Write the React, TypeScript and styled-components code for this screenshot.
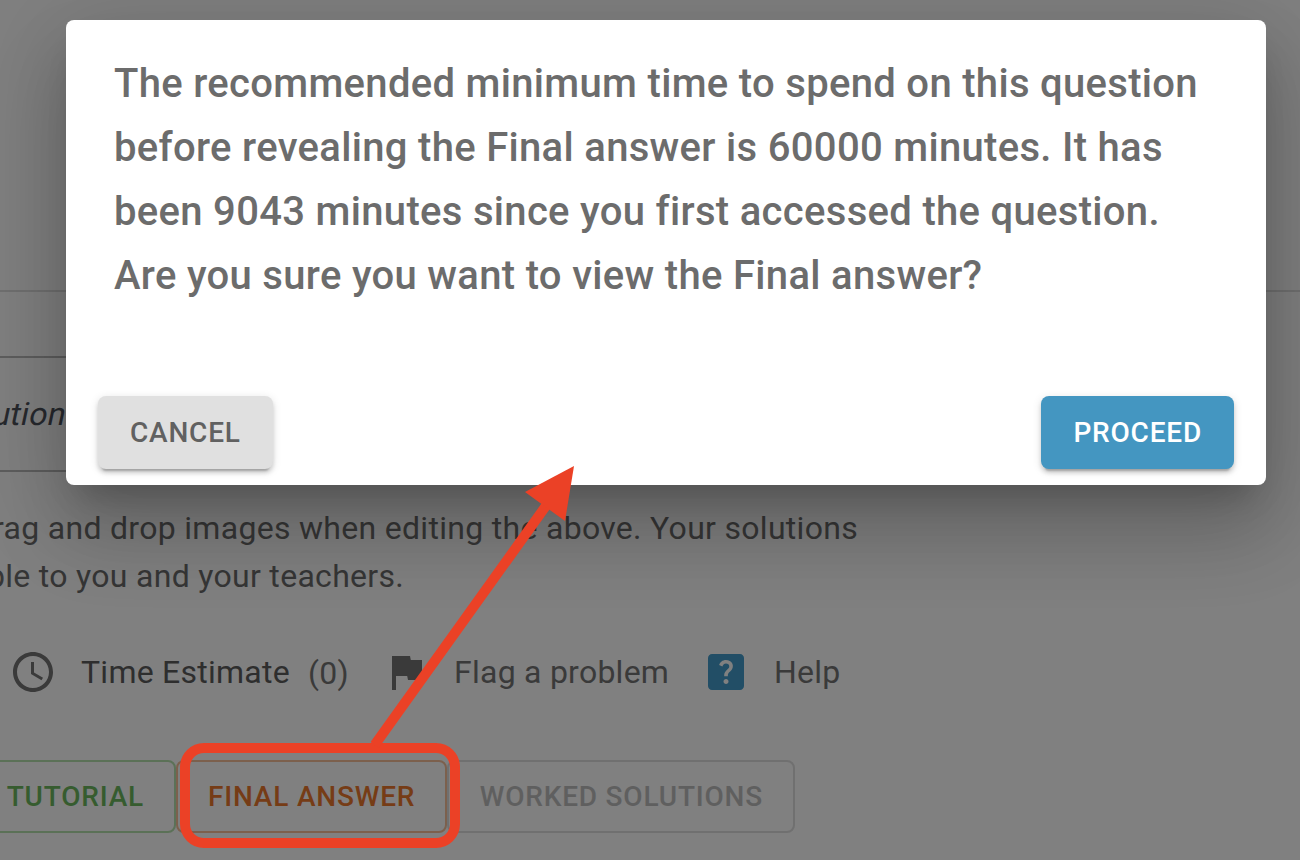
import React from "react";
import styled, { createGlobalStyle } from "styled-components";

const Global = createGlobalStyle`
  *, *::before, *::after { box-sizing: border-box; }
  html, body { margin: 0; padding: 0; }
  body {
    background: #808080;
    font-family: Roboto, "Liberation Sans", sans-serif;
    -webkit-font-smoothing: antialiased;
    overflow: hidden;
  }
`;

const Screen = styled.div`
  position: relative;
  width: 1300px;
  height: 860px;
  overflow: hidden;
  background: #808080;
`;

const Page = styled.main`
  display: flex;
  flex-direction: column;
  height: 860px;
`;

const Section = styled.section`
  height: 292px;
  border-bottom: 2px solid #707070;
`;

const Editor = styled.div`
  width: 640px;
  height: 116px;
  margin-top: 64px;
  border-top: 2px solid #5e5e5e;
  border-bottom: 2px solid #5e5e5e;
  display: flex;
  align-items: center;
  color: #27292e;
  font-size: 32px;
  letter-spacing: 0.3px;
  white-space: nowrap;
`;

const EditorText = styled.span`
  margin-left: -7px;
  transform: skewX(-12deg);
`;

const Hint = styled.p`
  margin: 32px 0 0 -13px;
  color: #363636;
  font-size: 32px;
  line-height: 48px;
  letter-spacing: 0.3px;
  white-space: nowrap;
`;

const HintLine = styled.span<{ $shift?: number }>`
  display: block;
  margin-left: ${(p) => p.$shift ?? 0}px;
`;

const Tools = styled.div`
  display: flex;
  align-items: center;
  height: 48px;
  margin: 48px 0 0 9px;
  color: #3a3a3a;
  font-size: 32px;
  letter-spacing: 0.25px;
  white-space: nowrap;
`;

const Tool = styled.div<{ $width: number; $gap: number; $color?: string }>`
  display: flex;
  align-items: center;
  gap: ${(p) => p.$gap}px;
  width: ${(p) => p.$width}px;
  color: ${(p) => p.$color ?? "#3a3a3a"};
`;

const Count = styled.span`
  margin-left: -6px;
  padding-top: 1px;
  color: #3a3a3a;
`;

const Icon = styled.svg<{ $color?: string }>`
  width: 48px;
  height: 48px;
  flex: none;
  fill: ${(p) => p.$color ?? "#3a3a3a"};
`;

const ButtonBase = styled.button`
  height: 73px;
  padding: 0 32px;
  border: 0;
  border-radius: 8px;
  background: none;
  font-family: inherit;
  font-size: 28px;
  font-weight: 500;
  line-height: 49px;
  letter-spacing: 0.8px;
  text-transform: uppercase;
  white-space: nowrap;
`;

const Tabs = styled.div`
  display: flex;
  margin: 64px 0 0 -60px;
`;

const TabButton = styled(ButtonBase)<{ $color: string; $line: string; $width: number }>`
  width: ${(p) => p.$width}px;
  padding: 0 30px;
  border: 2px solid ${(p) => p.$line};
  color: ${(p) => p.$color};
  text-align: right;
`;

const Overlay = styled.div`
  position: absolute;
  inset: 0;
  display: flex;
  align-items: flex-start;
  padding: 20px 0 0 66px;
`;

const Dialog = styled.div`
  display: flex;
  flex-direction: column;
  justify-content: space-between;
  width: 1200px;
  height: 465px;
  border-radius: 8px;
  background: #fff;
  box-shadow:
    0 22px 30px -14px rgba(0, 0, 0, 0.2),
    0 48px 76px 6px rgba(0, 0, 0, 0.14),
    0 18px 92px 16px rgba(0, 0, 0, 0.12);
`;

const DialogTitle = styled.h2`
  margin: 0;
  padding: 32px 48px;
  color: #6c6c6c;
  font-size: 40px;
  font-weight: 500;
  line-height: 64px;
  letter-spacing: 0.315px;
  white-space: nowrap;
`;

const Actions = styled.div`
  display: flex;
  justify-content: space-between;
  padding: 16px 32px;
`;

const ActionButton = styled(ButtonBase)<{ $primary?: boolean }>`
  background: ${(p) => (p.$primary ? "#4496c1" : "#e0e0e0")};
  color: ${(p) => (p.$primary ? "#fff" : "#616161")};
  box-shadow:
    0 6px 2px -4px rgba(0, 0, 0, 0.2),
    0 4px 4px 0 rgba(0, 0, 0, 0.14),
    0 2px 10px 0 rgba(0, 0, 0, 0.12);
`;

const Annotation = styled.svg`
  position: absolute;
  inset: 0;
  pointer-events: none;
`;

export default function App() {
  return (
    <Screen>
      <Global />
      <Page>
        <Section />
        <Editor>
          <EditorText>ution</EditorText>
        </Editor>
        <Hint>
          <HintLine $shift={6}>rag and drop images when editing the above. Your solutions</HintLine>
          <HintLine>ble to you and your teachers.</HintLine>
        </Hint>
        <Tools>
          <Tool $width={373} $gap={24} $color="#2e2e2e">
            <Icon viewBox="0 0 24 24">
              <path d="M11.99 2C6.47 2 2 6.48 2 12s4.47 10 9.99 10C17.52 22 22 17.52 22 12S17.52 2 11.99 2zM12 20c-4.42 0-8-3.58-8-8s3.58-8 8-8 8 3.58 8 8-3.58 8-8 8z" />
              <path d="M12.5 7H11v6l5.25 3.15.75-1.23-4.5-2.67z" />
            </Icon>
            <span>Time Estimate</span>
            <Count>(0)</Count>
          </Tool>
          <Tool $width={320} $gap={24}>
            <Icon viewBox="0 0 24 24">
              <path d="M14.4 6L14 4H5v17h2v-7h5.6l.4 2h7V6z" />
            </Icon>
            <span>Flag a problem</span>
          </Tool>
          <Tool $width={160} $gap={24}>
            <Icon viewBox="0 0 24 24" $color="#224e66">
              <path d="M19 3H5c-1.1 0-2 .9-2 2v14c0 1.1.9 2 2 2h14c1.1 0 2-.9 2-2V5c0-1.1-.9-2-2-2zm-6.99 15c-.7 0-1.26-.56-1.26-1.26 0-.71.56-1.25 1.26-1.25.71 0 1.25.54 1.25 1.25-.01.69-.54 1.26-1.25 1.26zm3.01-7.4c-.76 1.11-1.48 1.46-1.87 2.17-.16.29-.22.48-.22 1.41h-1.82c0-.49-.08-1.29.31-1.98.49-.87 1.42-1.39 1.96-2.16.57-.81.25-2.33-1.37-2.33-1.06 0-1.58.8-1.8 1.48l-1.65-.7C9.01 7.15 10.22 6 11.99 6c1.48 0 2.49.67 3.01 1.52.44.72.7 2.07.02 3.08z" />
            </Icon>
            <span>Help</span>
          </Tool>
        </Tools>
        <Tabs>
          <TabButton $width={236} $color="#365c2f" $line="#5b7157">Tutorial</TabButton>
          <TabButton $width={271} $color="#763c16" $line="#7c604d">Final answer</TabButton>
          <TabButton $width={348} $color="#5f5f5f" $line="#707070">Worked solutions</TabButton>
        </Tabs>
      </Page>
      <Overlay>
        <Dialog role="dialog">
          <DialogTitle>
            The recommended minimum time to spend on this question
            <br />
            before revealing the Final answer is 60000 minutes. It has
            <br />
            been 9043 minutes since you first accessed the question.
            <br />
            Are you sure you want to view the Final answer?
          </DialogTitle>
          <Actions>
            <ActionButton>Cancel</ActionButton>
            <ActionButton $primary>Proceed</ActionButton>
          </Actions>
        </Dialog>
      </Overlay>
      <Annotation width="1300" height="860" viewBox="0 0 1300 860">
        <rect x="185" y="748" width="270" height="95" rx="19" fill="none" stroke="#eb4126" strokeWidth="10" />
        <path d="M374.6 745L548 503" stroke="#eb4126" strokeWidth="10" />
        <path d="M574 466L525 492L565 521Z" fill="#eb4126" />
      </Annotation>
    </Screen>
  );
}
